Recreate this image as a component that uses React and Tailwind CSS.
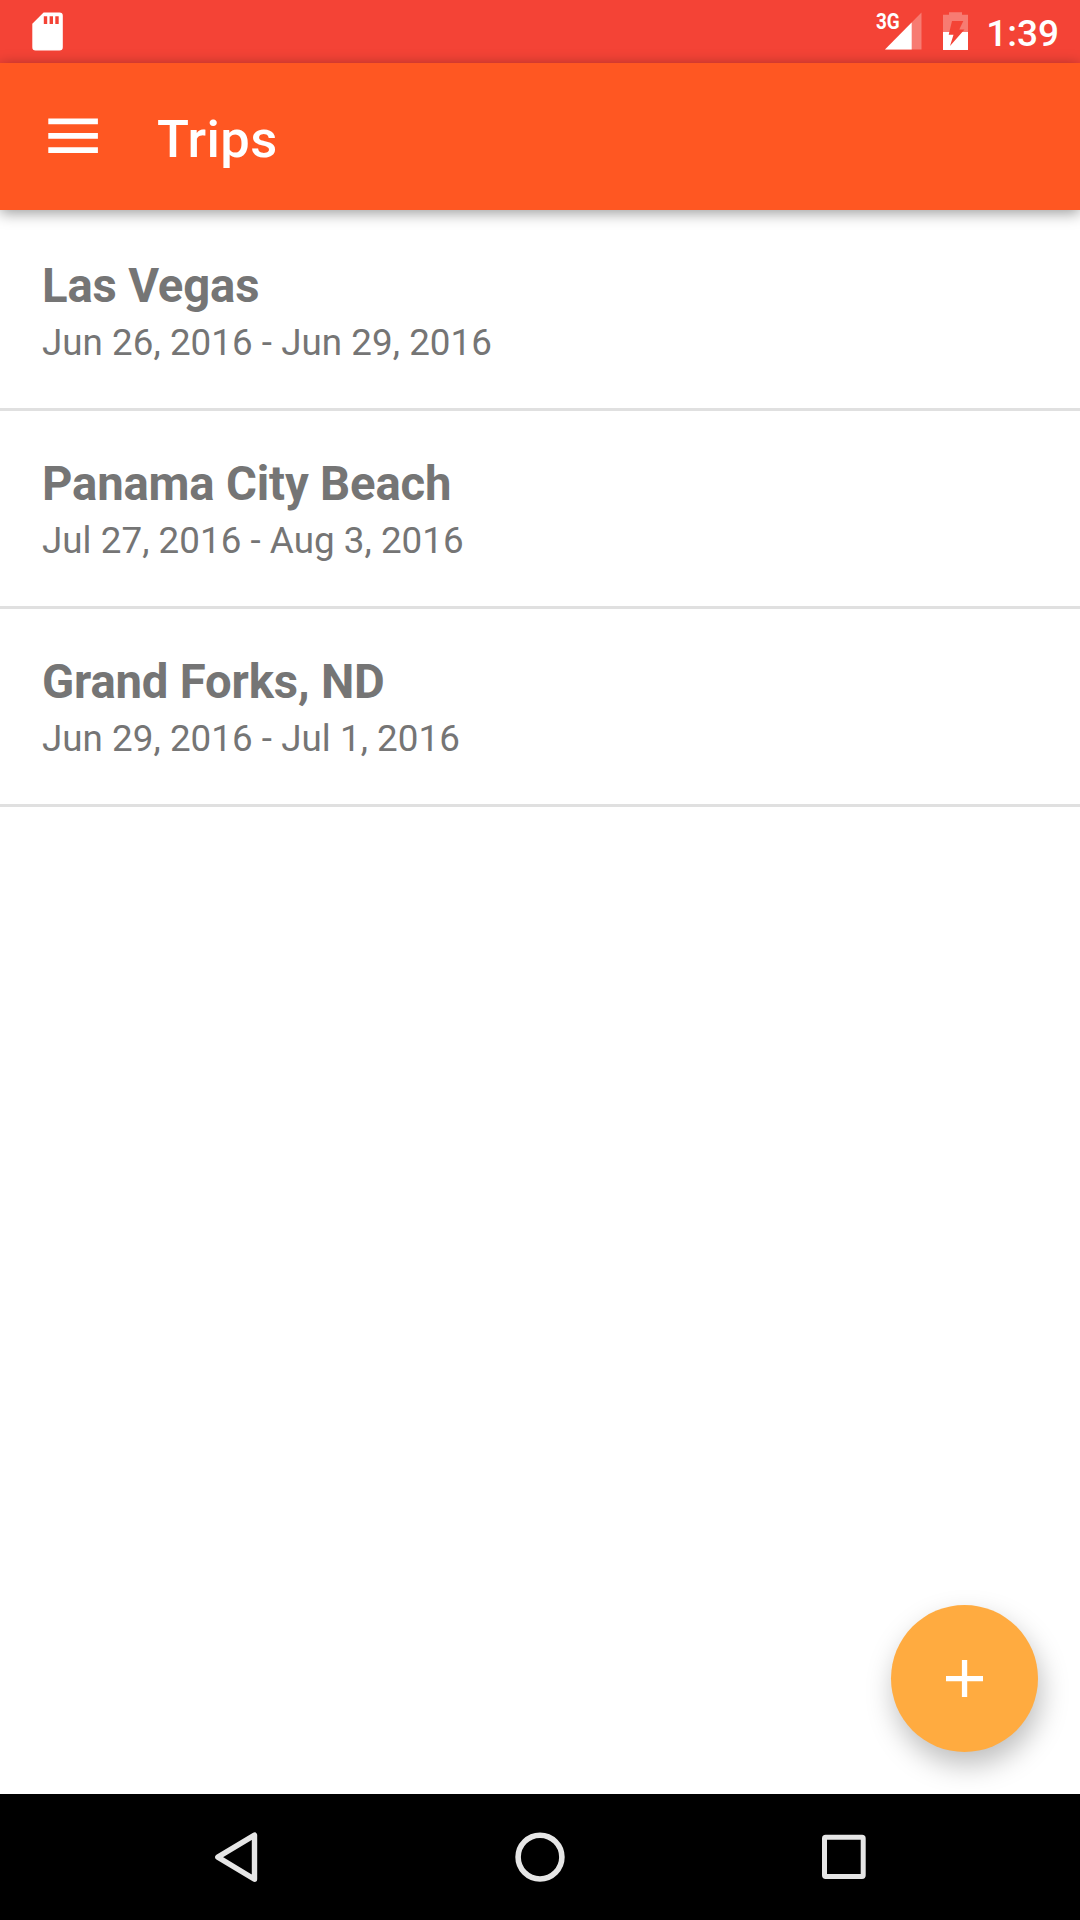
const trips = [
  { name: 'Las Vegas', dates: 'Jun 26, 2016 - Jun 29, 2016' },
  { name: 'Panama City Beach', dates: 'Jul 27, 2016 - Aug 3, 2016' },
  { name: 'Grand Forks, ND', dates: 'Jun 29, 2016 - Jul 1, 2016' },
];

function StatusBar() {
  return (
    <div className="flex h-[63px] shrink-0 items-start bg-[#f44336] text-white">
      <svg className="ml-8 mt-3" width="31" height="39" viewBox="0 0 31 39" fill="currentColor">
        <path
          fillRule="evenodd"
          d="M11.6 0.5H27.5a3.3 3.3 0 0 1 3.3 3.3V35.2a3.3 3.3 0 0 1-3.3 3.3H3.6a3.3 3.3 0 0 1-3.3-3.3V11.8zM11.8 4.3V12h3.4V4.3zM17.6 4.3V12H21V4.3zM23.3 4.3V12h3.4V4.3z"
        />
      </svg>
      <div className="ml-auto mt-3 flex items-start">
        <span className="w-[25px] whitespace-nowrap text-[22px] leading-[20px] font-bold">
          <span className="inline-block origin-left scale-x-[0.86]">3G</span>
        </span>
        <svg className="-ml-4" width="37" height="38" viewBox="0 0 37 38" fill="currentColor">
          <path d="M36.5 0.5V37.5H0z" opacity="0.3" />
          <path d="M26.7 10.6V37.5H0z" />
        </svg>
        <svg className="ml-[21px]" width="25" height="38" viewBox="0 0 25 38" fill="currentColor">
          <path d="M6 0.3H19V2.8H25V20H0V2.8H6z" opacity="0.3" />
          <path d="M0 20H25V38H0z" />
          <path d="M9 9H20.3L16.3 17.5H21.5L7 34L10.5 22.7H5.7z" className="fill-[#f44336]" />
        </svg>
      </div>
      <span className="ml-[18px] mr-[21px] mt-3 text-[37px] leading-[43px] font-medium">1:39</span>
    </div>
  );
}

function Toolbar() {
  return (
    <header className="relative z-10 flex h-[147px] shrink-0 items-center bg-[#ff5722] text-white shadow-[0_3px_14px_rgba(0,0,0,0.4)]">
      <button className="ml-12 -mt-px" aria-label="Open menu">
        <svg width="50" height="36" viewBox="0 0 50 36" fill="currentColor">
          <path d="M0.3 0.5H49.9V6.2H0.3zM0.3 15H49.9V20.7H0.3zM0.3 29.2H49.9V35H0.3z" />
        </svg>
      </button>
      <h1 className="ml-[59px] mt-[5px] text-[52.5px] leading-[62px] font-medium tracking-[0.4px]">Trips</h1>
    </header>
  );
}

function TripRow({ trip }) {
  return (
    <li className="-mb-[3px] flex h-[201px] flex-col border-b-[3px] border-[#e0e0e0] pt-12 pl-[42px] text-[#757575]">
      <h2 className="text-[47.25px] leading-[56px] font-bold tracking-[-0.17px]">{trip.name}</h2>
      <p className="mt-[7px] text-[36.75px] leading-[43px] tracking-[0.04px]">{trip.dates}</p>
    </li>
  );
}

function NavigationBar() {
  return (
    <nav className="flex h-[126px] shrink-0 items-center justify-center gap-[250px] bg-black text-[#e6e6e6]">
      <svg width="54" height="54" viewBox="0 0 54 54" fill="none" stroke="currentColor" strokeWidth="5.4" strokeLinejoin="round">
        <path d="M45.5 5.1V49.2L8.8 27.1z" />
      </svg>
      <svg width="54" height="54" viewBox="0 0 54 54" fill="none" stroke="currentColor" strokeWidth="5.6">
        <circle cx="27" cy="27.1" r="21.9" />
      </svg>
      <svg width="54" height="54" viewBox="0 0 54 54" fill="none" stroke="currentColor" strokeWidth="5">
        <rect x="7.5" y="7.2" width="38.7" height="39.2" rx="1.2" />
      </svg>
    </nav>
  );
}

export default function App() {
  return (
    <div className="flex h-[1920px] w-[1080px] flex-col overflow-hidden bg-white font-['Roboto',sans-serif]">
      <StatusBar />
      <Toolbar />
      <main className="relative flex-1">
        <ul>
          {trips.map((trip) => (
            <TripRow key={trip.name} trip={trip} />
          ))}
        </ul>
        <button
          aria-label="Add trip"
          className="absolute right-[42px] bottom-[42px] flex size-[147px] items-center justify-center rounded-full bg-[#ffab40] text-white shadow-[3px_13px_28px_rgba(0,0,0,0.26)]"
        >
          <svg width="37" height="37" viewBox="0 0 37 37" fill="currentColor">
            <path d="M15.9 0H21.2V15.9H37V21.2H21.2V37H15.9V21.2H0V15.9H15.9z" />
          </svg>
        </button>
      </main>
      <NavigationBar />
    </div>
  );
}
